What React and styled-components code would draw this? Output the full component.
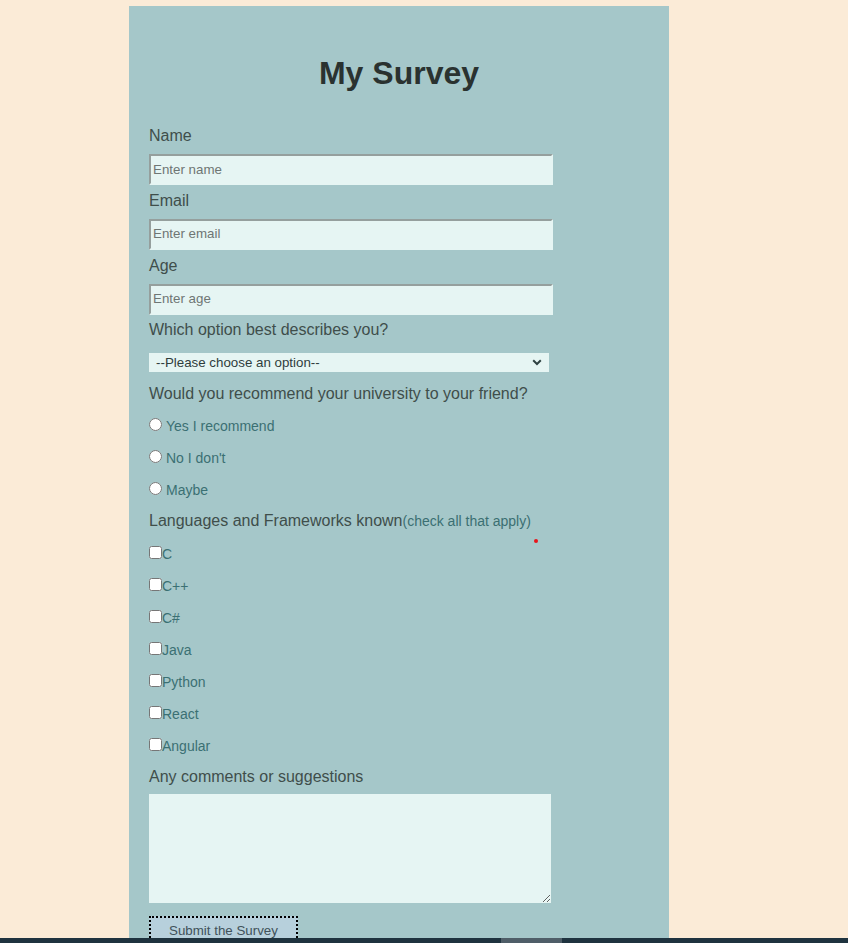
import React from "react";
import styled, { createGlobalStyle } from "styled-components";

const Global = createGlobalStyle`
  html, body {
    margin: 0;
    padding: 0;
    height: 943px;
    overflow: hidden;
    background: #fbebd7;
    font-family: "Liberation Sans", Arial, sans-serif;
  }
`;

const Page = styled.div`
  width: 848px;
  height: 943px;
  padding-top: 6px;
  box-sizing: border-box;
`;

const Card = styled.form`
  position: relative;
  margin-left: 129px;
  width: 540px;
  height: 960px;
  box-sizing: border-box;
  padding: 49px 20px 0 20px;
  background: #a5c7c9;
  display: flex;
  flex-direction: column;
  align-items: flex-start;
`;

const Title = styled.h1`
  align-self: stretch;
  margin: 0 0 29.5px 0;
  font-size: 32px;
  line-height: 36px;
  font-weight: bold;
  text-align: center;
  color: #2a3230;
`;

const Label = styled.label`
  display: block;
  font-size: 16px;
  line-height: 18px;
  color: #3f4e4b;
  margin-top: ${(p) => p.$mt ?? 6.7}px;
  margin-bottom: ${(p) => p.$mb ?? 9}px;
`;

const Hint = styled.span`
  font-size: 14px;
  color: #3b6f72;
`;

const TextInput = styled.input`
  box-sizing: border-box;
  width: 404px;
  height: 31px;
  margin: 0;
  padding: 0 2px 1px 2px;
  font-family: "Liberation Sans", Arial, sans-serif;
  font-size: 13.333px;
  background: #e6f5f3;
  border-style: solid;
  border-width: 2px;
  border-color: #959f9d #e6f5f3 #e6f5f3 #959f9d;
  outline: none;
  &::placeholder {
    color: #6e7674;
  }
`;

const SelectWrap = styled.div`
  position: relative;
  width: 400px;
  height: 19px;
`;

const Select = styled.select`
  appearance: none;
  -webkit-appearance: none;
  box-sizing: border-box;
  width: 400px;
  height: 19px;
  margin: 0;
  padding: 0 0 0 7px;
  border: none;
  border-radius: 0;
  background: #e6f5f3;
  color: #2f3d3d;
  font-family: "Liberation Sans", Arial, sans-serif;
  font-size: 13.333px;
`;

const Chevron = styled.svg`
  position: absolute;
  right: 7px;
  top: 6px;
  width: 10px;
  height: 7px;
  pointer-events: none;
`;

const Options = styled.div`
  display: flex;
  flex-direction: column;
  margin-top: ${(p) => p.$mt}px;
`;

const OptionRow = styled.label`
  display: block;
  height: 32px;
  line-height: 32px;
  font-size: 14px;
  color: #3b7073;
  white-space: nowrap;
`;

const Radio = styled.input.attrs({ type: "radio" })`
  margin: 3px 4px 0 0;
`;

const Check = styled.input.attrs({ type: "checkbox" })`
  margin: 0;
`;

const Comments = styled.textarea`
  box-sizing: border-box;
  width: 402px;
  height: 109px;
  margin: 0;
  border: none;
  background: #e6f5f3;
  display: block;
`;

const Submit = styled.button`
  margin-top: 13px;
  padding: 5px 18px 6px 18px;
  border: 2px dotted #000;
  background: #b7d0dc;
  color: #41525a;
  font-family: "Liberation Sans", Arial, sans-serif;
  font-size: 13.333px;
  line-height: 15px;
`;

const Dot = styled.span`
  position: absolute;
  left: 405px;
  top: 533px;
  width: 4px;
  height: 4px;
  border-radius: 50%;
  background: #e8141a;
`;

const BottomBar = styled.div`
  position: fixed;
  left: 0;
  right: 0;
  bottom: 0;
  height: 5px;
  background: #1f333f;
`;

const BarThumb = styled.div`
  position: absolute;
  left: 501px;
  top: 0;
  width: 61px;
  height: 5px;
  background: #4f5e68;
`;

const radios = ["Yes I recommend", "No I don't", "Maybe"];
const langs = ["C", "C++", "C#", "Java", "Python", "React", "Angular"];

export default function App() {
  return (
    <>
      <Global />
      <Page>
        <Card onSubmit={(e) => e.preventDefault()}>
          <Title>My Survey</Title>
          <Label htmlFor="name">Name</Label>
          <TextInput id="name" type="text" placeholder="Enter name" />
          <Label htmlFor="email">Email</Label>
          <TextInput id="email" type="email" placeholder="Enter email" />
          <Label htmlFor="age">Age</Label>
          <TextInput id="age" type="number" placeholder="Enter age" />
          <Label htmlFor="role" $mb={13.7}>Which option best describes you?</Label>
          <SelectWrap>
            <Select id="role" defaultValue="">
              <option value="" disabled>
                --Please choose an option--
              </option>
              <option value="student">Student</option>
              <option value="job">Full Time Job</option>
              <option value="other">Other</option>
            </Select>
            <Chevron viewBox="0 0 10 7">
              <path d="M1.2 1.3 L5 5 L8.8 1.3" fill="none" stroke="#2f4242" strokeWidth="2" />
            </Chevron>
          </SelectWrap>
          <Label $mt={13.5} $mb={0}>Would you recommend your university to your friend?</Label>
          <Options $mt={6.6}>
            {radios.map((r) => (
              <OptionRow key={r}>
                <Radio name="recommend" value={r} />
                {r}
              </OptionRow>
            ))}
          </Options>
          <Label $mt={6.1} $mb={0}>
            Languages and Frameworks known<Hint>(check all that apply)</Hint>
          </Label>
          <Options $mt={8.2}>
            {langs.map((l) => (
              <OptionRow key={l}>
                <Check value={l} />
                {l}
              </OptionRow>
            ))}
          </Options>
          <Label htmlFor="comments" $mt={5.8} $mb={7.8}>Any comments or suggestions</Label>
          <Comments id="comments" />
          <Submit type="submit">Submit the Survey</Submit>
          <Dot />
        </Card>
      </Page>
      <BottomBar>
        <BarThumb />
      </BottomBar>
    </>
  );
}
